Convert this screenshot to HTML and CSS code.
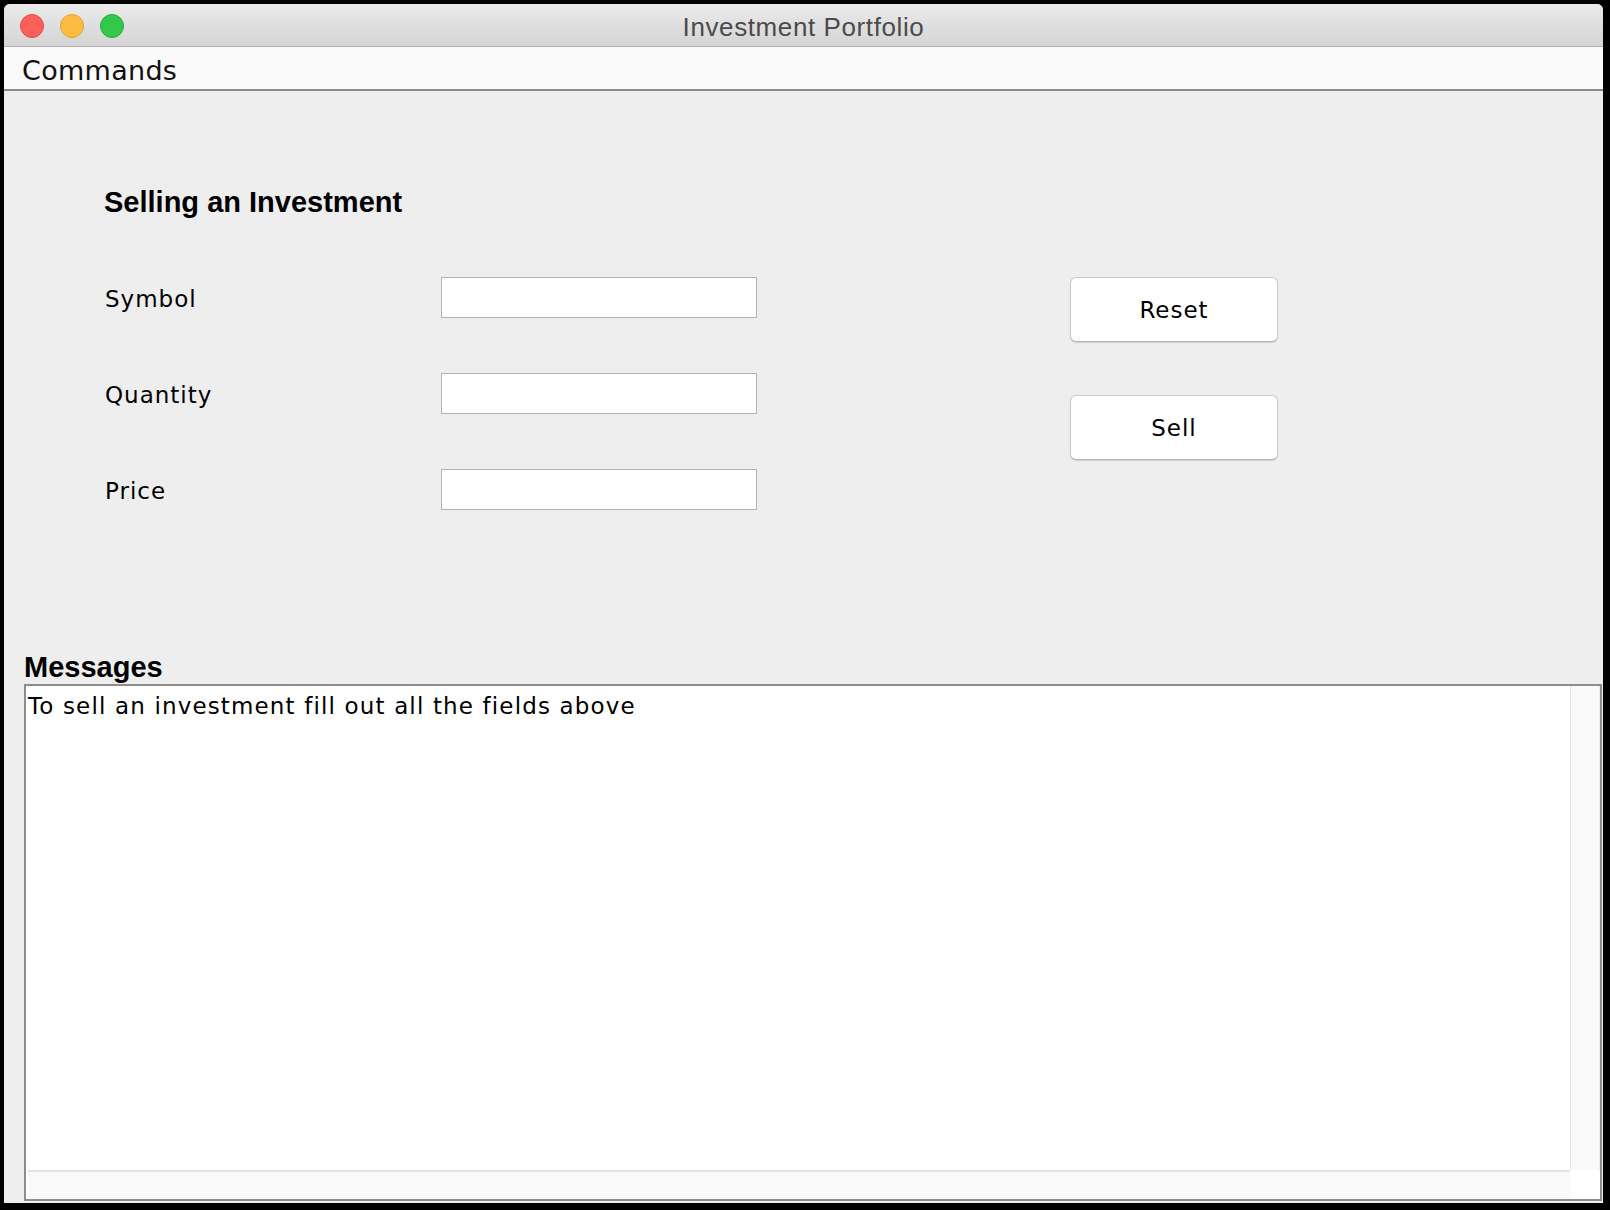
FILE: index.html
```html
<!DOCTYPE html>
<html lang="en">
<head>
<meta charset="utf-8">
<title>Investment Portfolio</title>
<link rel="stylesheet" href="styles.css">
</head>
<body>
<div class="window">
  <header class="titlebar">
    <div class="lights">
      <span class="light red"></span>
      <span class="light yellow"></span>
      <span class="light green"></span>
    </div>
    <div class="title">Investment Portfolio</div>
    <div class="spacer"></div>
  </header>
  <nav class="menubar"><span class="menu">Commands</span></nav>
  <main class="content">
    <h1 class="heading">Selling an Investment</h1>
    <div class="form">
      <div class="fields">
        <label class="label" for="sym">Symbol</label><input class="field" id="sym" type="text">
        <label class="label" for="qty">Quantity</label><input class="field" id="qty" type="text">
        <label class="label" for="prc">Price</label><input class="field" id="prc" type="text">
      </div>
      <div class="buttons">
        <button class="btn" type="button">Reset</button>
        <button class="btn" type="button">Sell</button>
      </div>
    </div>
    <h2 class="msg-label">Messages</h2>
    <div class="msg-box">
      <div class="msg-text">To sell an investment fill out all the fields above</div>
      <div class="vscroll"></div>
      <div class="hscroll"></div>
      <div class="corner"></div>
    </div>
  </main>
</div>
</body>
</html>
```
FILE: styles.css
```css
* { box-sizing: border-box; }

html, body {
  margin: 0;
  padding: 0;
  background: #000;
}

body {
  padding: 4px 0 0 4px;
  width: 1610px;
  height: 1210px;
  overflow: hidden;
}

.window {
  width: 1599px;
  height: 1199px;
  background: #eeeeee;
  border-radius: 6px 6px 0 0;
  overflow: hidden;
  display: flex;
  flex-direction: column;
}

.titlebar {
  height: 43px;
  flex: none;
  display: grid;
  grid-template-columns: 1fr auto 1fr;
  align-items: center;
  background: linear-gradient(#ebebeb, #d4d4d4);
  border-bottom: 1px solid #b1b1b1;
}

.lights {
  display: flex;
  gap: 16px;
  padding-left: 16px;
  margin-top: 2px;
}

.light {
  width: 24px;
  height: 24px;
  border-radius: 50%;
  display: block;
}
.red { background: #fc605b; border: 1px solid #de4b46; }
.yellow { background: #fdbc40; border: 1px solid #dea234; }
.green { background: #34c84a; border: 1px solid #28a93a; }

.title {
  font-family: "Liberation Sans", Arial, sans-serif;
  font-size: 26px;
  letter-spacing: 0.6px;
  color: #4b4b4b;
  padding-top: 4px;
}

.menubar {
  height: 44px;
  flex: none;
  background: #fafafa;
  border-bottom: 2px solid #8a8a8a;
  padding: 7px 0 0 18px;
}

.menu {
  font-family: "DejaVu Sans", sans-serif;
  font-size: 27px;
  line-height: 34px;
  letter-spacing: 0.3px;
  color: #111;
}

.content {
  flex: 1;
  display: flex;
  flex-direction: column;
  padding-top: 94px;
}

.heading {
  margin: 0 0 0 100px;
  font-family: "Liberation Sans", Arial, sans-serif;
  font-weight: bold;
  font-size: 29px;
  line-height: 34px;
  color: #000;
}

.form {
  display: flex;
  margin: 58px 0 0 100px;
}

.fields {
  display: grid;
  grid-template-columns: 337px 316px;
  grid-auto-rows: 41px;
  row-gap: 55px;
  align-items: center;
}

.label {
  font-family: "DejaVu Sans", sans-serif;
  font-size: 23px;
  letter-spacing: 1px;
  color: #000;
  padding: 2px 0 0 1px;
}

.field {
  width: 316px;
  height: 41px;
  margin: 0;
  border: 1px solid #b2b2b2;
  background: #fff;
  outline: none;
}

.buttons {
  display: flex;
  flex-direction: column;
  gap: 53px;
  margin-left: 313px;
}

.btn {
  width: 208px;
  height: 65px;
  margin: 0;
  padding: 0;
  background: #fff;
  border: 1px solid #c9c9c9;
  border-bottom-color: #b4b4b4;
  border-radius: 6px;
  box-shadow: 0 1px 1px rgba(0, 0, 0, 0.12);
  font-family: "DejaVu Sans", sans-serif;
  font-size: 23px;
  letter-spacing: 1px;
  color: #000;
}

.msg-label {
  margin: 140px 0 0 20px;
  font-family: "Liberation Sans", Arial, sans-serif;
  font-weight: bold;
  font-size: 29px;
  line-height: 34px;
  color: #000;
}

.msg-box {
  flex: 1;
  margin: 0 1px 2px 20px;
  border: 2px solid #8d8d8d;
  background: #fff;
  display: grid;
  grid-template-columns: 1fr 30px;
  grid-template-rows: 1fr 29px;
}

.msg-text {
  padding: 6px 0 0 2px;
  font-family: "DejaVu Sans", sans-serif;
  font-size: 23px;
  line-height: 28px;
  letter-spacing: 1.15px;
  color: #000;
}

.vscroll {
  background: #f9f9f9;
  border-left: 1px solid #e4e4e4;
  border-right: 1px solid #ececec;
}

.hscroll {
  margin-left: 2px;
  background: #f9f9f9;
  border-top: 2px solid #e3e3e3;
}

.corner {
  background: #fff;
}
```
